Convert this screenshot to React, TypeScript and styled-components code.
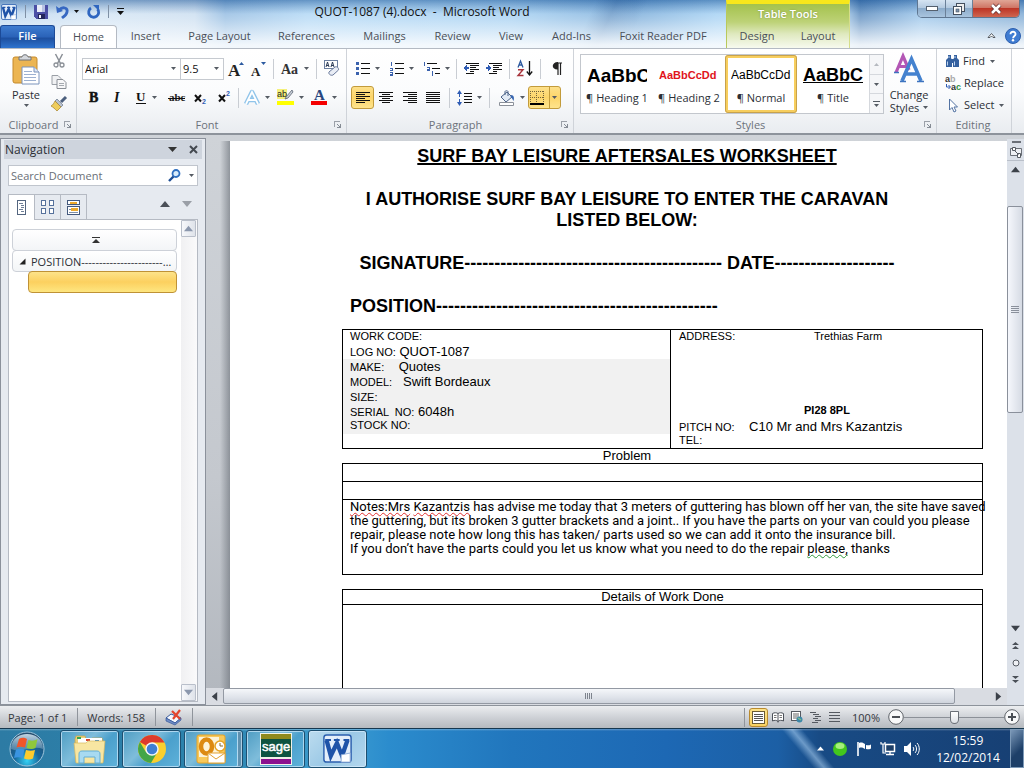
import React from "react";
import styled, { createGlobalStyle, css } from "styled-components";

const Global = createGlobalStyle`
  * { box-sizing: border-box; }
  html, body { margin: 0; padding: 0; }
  body { font-family: "Open Sans", "Noto Sans", sans-serif; font-size: 11px; color: #2b2f36; overflow: hidden; }
  button, input, select { font: inherit; color: inherit; margin: 0; }
  button { border: 0; padding: 0; background: none; cursor: default; }
  svg { display: block; flex: none; overflow: visible; }
`;

const Window = styled.div`
  display: flex;
  flex-direction: column;
  height: 100vh;
  min-width: 960px;
  overflow: hidden;
`;

/* ---------- title bar and tabs ---------- */

const Glass = styled.header`
  flex: none;
  background:
    linear-gradient(180deg, rgba(255,255,255,0) 0, rgba(255,255,255,0.35) 20px, rgba(250,252,254,0.92) 45px),
    linear-gradient(115deg, rgba(40,90,150,0) 57%, rgba(40,90,150,0.35) 59%, rgba(40,90,150,0) 62%),
    linear-gradient(180deg, rgba(30,85,150,0.5) 0, rgba(30,85,150,0) 14px),
    linear-gradient(90deg, #b4d2ee 0, #cfe2f3 10%, #c6dbef 19%, #8ab6df 22%, #a9d3f4 30%, #9ccbf0 50%, #6fa5d6 62%, #9bccf2 70%, #b7dcf8 82%, #4b80b8 84%, #90bfe8 90%, #6fa0cf 100%);
`;

const TitleRow = styled.div`
  display: grid;
  grid-template-columns: 1fr auto 1fr;
  height: 25px;
`;

const QuickBar = styled.div`
  display: flex;
  align-items: center;
  gap: 8px;
  padding-left: 1px;
  padding-bottom: 2px;
`;

const QuickButton = styled.button`
  display: flex;
  align-items: center;
  gap: 5px;
`;

const Rule = styled.span<{ $h?: number }>`
  width: 1px;
  height: ${(p) => p.$h ?? 24}px;
  background: #c9cdd3;
  flex: none;
`;

const DarkRule = styled(Rule)`
  background: #7f90a5;
`;

const DocTitle = styled.h1`
  margin: 0;
  padding-right: 180px;
  font-size: 12px;
  font-weight: 400;
  line-height: 24px;
  color: #111;
  white-space: pre;
`;

const TitleRight = styled.div`
  display: flex;
  justify-content: flex-end;
  align-items: flex-start;
`;

const WindowButtons = styled.div`
  display: flex;
  margin-right: 4px;
  border: 1px solid #5f7690;
  border-top: 0;
  border-radius: 0 0 5px 5px;
  overflow: hidden;
`;

const WindowButton = styled.button<{ $close?: boolean }>`
  display: flex;
  align-items: center;
  justify-content: center;
  height: 17px;
  width: ${(p) => (p.$close ? 47 : 27)}px;
  background: ${(p) =>
    p.$close
      ? "linear-gradient(#e0a596 0, #cf7565 45%, #bd3526 50%, #cf6650 100%)"
      : "linear-gradient(#d6e4f2 0, #b4cae0 45%, #8daccb 50%, #a9c4de 100%)"};
  & + & { border-left: 1px solid #6b8098; }
`;

const TabRow = styled.nav`
  display: flex;
  align-items: flex-end;
  height: 23px;
  padding-right: 3px;
`;

const FileTab = styled.button`
  width: 55px;
  height: 23px;
  margin-right: 5px;
  padding-bottom: 3px;
  border: 1px solid #1c4a97;
  border-bottom: 0;
  border-radius: 3px 3px 0 0;
  background: linear-gradient(#3f7dd0 0, #2a62b8 50%, #1d4f9f 55%, #2f74cf 100%);
  color: #fff;
  font-weight: 600;
`;

const Tab = styled.button<{ $w: number; $on?: boolean }>`
  width: ${(p) => p.$w}px;
  height: 23px;
  padding-bottom: 2px;
  color: #4a4f57;
  ${(p) =>
    p.$on &&
    css`
      height: 24px;
      margin-bottom: -1px;
      padding-bottom: 3px;
      border: 1px solid #b4bac3;
      border-bottom: 0;
      border-radius: 4px 4px 0 0;
      background: #fff;
    `}
`;

const ToolTabs = styled.div`
  display: flex;
  flex-direction: column;
  align-self: flex-end;
  height: 48px;
  width: 124px;
  margin-left: 5px;
  border-top: 4px solid #f8e71b;
  border-left: 1px solid #b9c95c;
  border-right: 1px solid #d6de8a;
  background: linear-gradient(#a4c24c 0, #bdd277 18px, #dfe9bf 30px, #f7faef 100%);
`;

const ToolTitle = styled.div`
  height: 21px;
  line-height: 20px;
  text-align: center;
  color: #fff;
  font-weight: 600;
  text-shadow: 0 0 2px #7f9440;
`;

const ToolRow = styled.div`
  display: flex;
  height: 23px;
`;

const TabEnd = styled.div`
  display: flex;
  align-items: center;
  gap: 9px;
  height: 23px;
  margin-left: auto;
  padding-bottom: 2px;
`;

/* ---------- ribbon ---------- */

const Ribbon = styled.div`
  flex: none;
  display: flex;
  height: 87px;
  border-top: 1px solid #b4bac3;
  border-bottom: 2px solid #8d939b;
  background: linear-gradient(#fff 0, #fbfcfd 50%, #e9ecf0 100%);
`;

const Group = styled.section<{ $w: number }>`
  display: flex;
  flex-direction: column;
  flex: 0 0 auto;
  width: ${(p) => p.$w}px;
  border-right: 1px solid #cfd3d9;
`;

const GroupBody = styled.div<{ $pad?: number; $top?: number }>`
  flex: 1;
  display: flex;
  padding: ${(p) => p.$top ?? 5}px 4px 0 ${(p) => p.$pad ?? 4}px;
`;

const GroupLabel = styled.div`
  display: flex;
  align-items: center;
  height: 16px;
  padding: 0 5px 2px 3px;
  color: #6c727b;
  span { flex: 1; text-align: center; }
`;

const Rows = styled.div`
  display: flex;
  flex-direction: column;
  gap: 6px;
  padding-top: 3px;
`;

const Row = styled.div`
  display: flex;
  align-items: center;
  height: 23px;
`;

const Tool = styled.button<{ $w: number; $on?: boolean }>`
  display: flex;
  align-items: center;
  justify-content: center;
  gap: 5px;
  width: ${(p) => p.$w}px;
  height: 23px;
  flex: none;
  border-radius: 3px;
  color: #111;
  ${(p) =>
    p.$on &&
    css`
      border: 1px solid #c29b3b;
      background: linear-gradient(#fde08a, #fcd56a 50%, #fee48c);
    `}
`;

const Split = styled.span`
  display: flex;
  align-items: center;
  justify-content: center;
  width: 11px;
  height: 21px;
  border-left: 1px solid #c29b3b;
`;

const Gap = styled.span<{ $w: number }>`
  display: flex;
  justify-content: center;
  width: ${(p) => p.$w}px;
`;

const Combo = styled.label<{ $w: number }>`
  position: relative;
  display: block;
  width: ${(p) => p.$w}px;
  height: 22px;
  margin-right: -1px;
  svg { position: absolute; right: 5px; top: 9px; pointer-events: none; }
  select {
    appearance: none;
    width: 100%;
    height: 22px;
    padding: 0 2px;
    border: 1px solid #c6cad0;
    background: #fff;
    color: #111;
    border-radius: 0;
  }
`;

const PasteButton = styled.button`
  display: flex;
  flex-direction: column;
  align-items: center;
  width: 44px;
  color: #2b2f36;
  span { line-height: 19px; }
`;

const SideIcons = styled.div`
  display: flex;
  flex-direction: column;
  align-items: center;
  gap: 7px;
  width: 22px;
`;

const Gallery = styled.div`
  display: flex;
  height: 60px;
  border: 1px solid #c3c7cd;
  background: #fff;
`;

const StyleItem = styled.button<{ $on?: boolean }>`
  width: 72px;
  height: 58px;
  display: flex;
  flex-direction: column;
  justify-content: space-between;
  align-items: center;
  padding: 8px 6px;
  overflow: hidden;
  ${(p) =>
    p.$on &&
    css`
      padding: 5px 3px;
      border: 3px solid #f7ce5e;
      outline: 1px solid #c8a24c;
      outline-offset: -1px;
      border-radius: 3px;
    `}
`;

const Sample = styled.span<{ $kind: "h1" | "h2" | "normal" | "title" }>`
  width: 60px;
  height: 25px;
  line-height: 25px;
  overflow: hidden;
  white-space: nowrap;
  text-align: left;
  font-family: "Liberation Sans", Arial, sans-serif;
  color: #000;
  ${(p) => p.$kind === "h1" && "font-size: 19px; font-weight: 700;"}
  ${(p) => p.$kind === "h2" && "font-size: 11px; font-weight: 700; color: #e0141c;"}
  ${(p) => p.$kind === "normal" && "font-size: 12px;"}
  ${(p) => p.$kind === "title" && "font-size: 18px; font-weight: 700; text-decoration: underline;"}
`;

const StyleName = styled.span`
  line-height: 14px;
  white-space: nowrap;
`;

const GalleryScroll = styled.div`
  display: flex;
  flex-direction: column;
  width: 14px;
  border-left: 1px solid #d5d8dd;
  button {
    flex: 1;
    display: flex;
    align-items: center;
    justify-content: center;
    background: #f5f6f8;
  }
  button + button { border-top: 1px solid #d5d8dd; }
`;

const ChangeButton = styled.button`
  display: flex;
  flex-direction: column;
  align-items: center;
  width: 50px;
  margin-left: 2px;
  line-height: 13px;
  > span:first-of-type { margin-top: 5px; }
`;

const Inline = styled.span`
  display: flex;
  align-items: center;
  gap: 4px;
`;

const EditList = styled.div`
  display: flex;
  flex-direction: column;
`;

const EditButton = styled.button`
  display: flex;
  align-items: center;
  gap: 3px;
  height: 22px;
  line-height: 16px;
`;

/* ---------- workspace ---------- */

const Workspace = styled.main`
  flex: 1;
  min-height: 0;
  display: flex;
  background: linear-gradient(#cfd3d8 0, #c4c8ce 60%, #b2b7be 100%);
`;

const NavPane = styled.aside`
  display: flex;
  flex-direction: column;
  width: 206px;
  flex: none;
  margin-top: 3px;
  padding: 1px 3px 2px 3px;
  border: 1px solid #8b919b;
  background: #e6eaf0;
`;

const NavHead = styled.div`
  display: flex;
  align-items: center;
  gap: 12px;
  height: 19px;
  padding: 0 4px 0 1px;
  background: #ced4dd;
  h2 { flex: 1; margin: 0; font-size: 12px; font-weight: 400; line-height: 17px; }
`;

const Search = styled.label`
  display: flex;
  align-items: center;
  gap: 8px;
  height: 21px;
  margin: 6px 4px 8px;
  padding: 0 3px 0 2px;
  border: 1px solid #c0c5cd;
  background: #fff;
  input {
    flex: 1;
    min-width: 0;
    border: 0;
    padding: 0;
    outline: 0;
    background: none;
  }
  input::placeholder { color: #6a6f77; opacity: 1; }
`;

const NavTabs = styled.div`
  display: flex;
  margin: 0 4px;
  height: 25px;
`;

const NavTab = styled.button<{ $on?: boolean }>`
  display: flex;
  align-items: center;
  justify-content: center;
  width: 27px;
  height: ${(p) => (p.$on ? 26 : 25)}px;
  margin-right: -1px;
  border: 1px solid #b5bac3;
  border-bottom: 0;
  background: ${(p) => (p.$on ? "#fff" : "#e6eaf0")};
  z-index: 1;
`;

const NavArrows = styled.div`
  display: flex;
  align-items: center;
  gap: 12px;
  margin-left: auto;
  padding-right: 6px;
  padding-bottom: 5px;
`;

const NavList = styled.div`
  flex: 1;
  display: flex;
  margin: 0 4px;
  border: 1px solid #b5bac3;
  background: #fff;
`;

const Headings = styled.div`
  flex: 1;
  display: flex;
  flex-direction: column;
  align-items: flex-end;
  padding: 9px 4px 0 2px;
  min-width: 0;
`;

const Heading = styled.button<{ $level: number; $on?: boolean }>`
  display: flex;
  align-items: center;
  justify-content: ${(p) => (p.$level ? "flex-start" : "center")};
  gap: 5px;
  width: ${(p) => (p.$level === 2 ? 149 : 165)}px;
  height: 22px;
  margin-bottom: -1px;
  padding: 0 3px 0 6px;
  border: 1px solid ${(p) => (p.$on ? "#bf9236" : "#cdd1d8")};
  border-radius: 4px;
  background: ${(p) => (p.$on ? "linear-gradient(#fde38a, #fcd05f 50%, #fee680)" : "linear-gradient(#fff, #f3f5f7)")};
  white-space: nowrap;
  span { overflow: hidden; text-overflow: ellipsis; }
`;

const NavScroll = styled.div`
  display: flex;
  flex-direction: column;
  justify-content: space-between;
  width: 16px;
  background: linear-gradient(90deg, #f0f0f2, #fafafb);
`;

const ScrollEnd = styled.button`
  display: flex;
  align-items: center;
  justify-content: center;
  width: 15px;
  height: 17px;
  border: 1px solid #b9bfca;
  border-radius: 1px;
  background: linear-gradient(90deg, #f7f8fb, #dfe3ea);
`;

const DocPane = styled.div`
  flex: 1;
  min-width: 0;
  display: flex;
  flex-direction: column;
`;

const DocView = styled.div`
  flex: 1;
  min-height: 0;
  margin-top: 6px;
  padding-left: 24px;
  overflow: hidden;
  background: linear-gradient(90deg, rgba(110,116,124,0) 14px, rgba(110,116,124,0.65) 24px);
`;

const Page = styled.article`
  min-height: 100%;
  padding: 5px 0 0 112px;
  background: #fff;
  color: #000;
  font-family: "Liberation Sans", Arial, sans-serif;
  font-size: 13px;
  line-height: 15px;
  white-space: pre;
`;

const Column = styled.div`
  max-width: 570px;
  padding: 0 8px;
`;

const Big = styled.p<{ $left?: boolean; $under?: boolean }>`
  margin: 0 0 22px;
  font-size: 18px;
  line-height: 21px;
  font-weight: 700;
  text-align: ${(p) => (p.$left ? "left" : "center")};
  text-decoration: ${(p) => (p.$under ? "underline" : "none")};
  text-decoration-thickness: 2px;
  text-underline-offset: 1px;
  &:last-child { margin-bottom: 12px; }
`;

const Sheet = styled.table`
  width: 641px;
  border-collapse: collapse;
  table-layout: fixed;
  td, th { border: 1px solid #000; padding: 0; vertical-align: top; font-weight: 400; }
`;

const Line = styled.div<{ $short?: boolean; $shade?: boolean; $tight?: boolean }>`
  height: ${(p) => (p.$short ? 14 : 15)}px;
  line-height: ${(p) => (p.$short || p.$tight ? 12 : 15)}px;
  padding-left: 7px;
  background: ${(p) => (p.$shade ? "#f1f1f1" : "transparent")};
  small { font-size: 11px; }
`;

const RightCell = styled.div`
  padding-left: 1px;
`;

const Address = styled.div`
  display: grid;
  grid-template-columns: 135px 1fr;
  padding-left: 7px;
  height: 74px;
  font-size: 11px;
  line-height: 13px;
`;

const Postcode = styled.div`
  height: 15px;
  padding-left: 132px;
  font-size: 11px;
  line-height: 13px;
  font-weight: 700;
`;

const Caption = styled.div`
  height: 14px;
  line-height: 13px;
  text-align: center;
`;

const Cell = styled.td<{ $h: number }>`
  height: ${(p) => p.$h}px;
`;

const Notes = styled.p`
  margin: 0;
  padding-left: 7px;
  font-family: Roboto, "Liberation Sans", sans-serif;
  line-height: 14px;
`;

const Squiggle = styled.span<{ $c: string }>`
  text-decoration: underline wavy ${(p) => p.$c} 1px;
  text-underline-offset: 1px;
  text-decoration-skip-ink: none;
`;

const HScroll = styled.div`
  display: flex;
  flex: none;
  height: 17px;
  background: #d9dce2;
`;

const BarEnd = styled.button<{ $tall?: boolean }>`
  display: flex;
  align-items: center;
  justify-content: center;
  width: 17px;
  height: ${(p) => (p.$tall ? 22 : 17)}px;
  flex: none;
  border-bottom: ${(p) => (p.$tall ? "1px solid #b9bfc9" : "0")};
`;

const HThumb = styled.div`
  flex: 1;
  display: flex;
  align-items: center;
  justify-content: center;
  height: 16px;
  margin-right: 35px;
  border: 1px solid #9399a3;
  border-radius: 2px;
  background: linear-gradient(#f5f7fa, #dfe3ea 60%, #cfd4dc);
`;

const VScroll = styled.div`
  display: flex;
  flex-direction: column;
  align-items: center;
  width: 17px;
  margin-top: 4px;
  padding-bottom: 17px;
  flex: none;
  background: #dce1e9;
`;

const VTrack = styled.div`
  flex: 1;
  width: 100%;
  padding-top: 28px;
`;

const VThumb = styled.div`
  display: flex;
  align-items: center;
  justify-content: center;
  width: 16px;
  height: 50%;
  border: 1px solid #8a909b;
  border-radius: 2px;
  background: linear-gradient(90deg, #f5f7fc, #d6dbe4);
`;

/* ---------- status bar ---------- */

const Status = styled.footer`
  flex: none;
  display: flex;
  align-items: center;
  height: 23px;
  padding: 0 4px 0 8px;
  border-top: 1px solid #8d939b;
  background: linear-gradient(#eceef0, #cfd2d7 50%, #b6babf);
  color: #33373d;
`;

const StatusText = styled.button`
  padding-right: 10px;
  margin-right: 9px;
  height: 18px;
  border-right: 1px solid #8f949b;
`;

const Views = styled.div`
  display: flex;
  margin-left: auto;
  padding-left: 4px;
  border-left: 1px solid #8f949b;
`;

const Percent = styled.button`
  margin: 0 8px;
`;

const ViewButton = styled.button<{ $on?: boolean }>`
  display: flex;
  align-items: center;
  justify-content: center;
  width: 19px;
  height: 19px;
  border-radius: 3px;
  border: ${(p) => (p.$on ? "1px solid #b98a2e" : "0")};
  background: ${(p) => (p.$on ? "linear-gradient(#fde38a, #f9d262)" : "none")};
`;

const Zoom = styled.input`
  appearance: none;
  width: 100px;
  height: 14px;
  background: linear-gradient(#8b9097, #8b9097) center / 100% 1px no-repeat;
  &::-webkit-slider-thumb {
    appearance: none;
    width: 9px;
    height: 13px;
    border: 1px solid #6a6f76;
    border-radius: 1px 1px 5px 5px;
    background: linear-gradient(#fff, #dfe2e6);
  }
`;

/* ---------- taskbar ---------- */

const Taskbar = styled.div`
  flex: none;
  display: flex;
  align-items: center;
  height: 40px;
  padding-left: 9px;
  border-top: 1px solid #16374f;
  color: #fff;
  background:
    linear-gradient(180deg, rgba(255,255,255,0.3) 0, rgba(255,255,255,0) 2px),
    linear-gradient(50deg, rgba(190,225,255,0) 77%, rgba(190,225,255,0.5) 78%, rgba(190,225,255,0) 79%),
    linear-gradient(90deg, #2d7ba4 0, #2b83ad 20%, #3d9dd0 33%, #2b8ccd 38%, #2176bd 50%, #1d68b4 65%, #1c5fa5 76%, #184b85 80%, #173f73 100%);
`;

const Start = styled.button`
  margin-right: 15px;
`;

const TaskButton = styled.button<{ $on?: boolean; $stack?: boolean }>`
  display: flex;
  align-items: center;
  justify-content: center;
  width: 59px;
  height: 38px;
  margin-right: 3px;
  padding-right: ${(p) => (p.$stack ? 6 : 0)}px;
  border: 1px solid #1d4f70;
  border-radius: 3px;
  box-shadow: inset 0 0 0 1px rgba(220,240,255,0.65)${(p) => (p.$stack ? ", inset -4px 0 0 rgba(30,85,120,0.55), inset -5px 0 0 rgba(220,240,255,0.7)" : "")};
  background: ${(p) =>
    p.$on
      ? "linear-gradient(135deg, #bcdcef, #9cc9e6 50%, #b3d7ee)"
      : "linear-gradient(135deg, #4f9dc3 0, #7fbddb 40%, #4ba0cc 60%, #5fb2da 100%)"};
`;

const Tray = styled.div`
  display: flex;
  align-items: center;
  gap: 8px;
  margin-left: auto;
`;

const Clock = styled.time`
  width: 80px;
  font-size: 12px;
  line-height: 17px;
  text-align: center;
`;

const ShowDesktop = styled.button`
  width: 14px;
  height: 39px;
  margin-left: -6px;
  border: 1px solid #7d9ab8;
  background: linear-gradient(135deg, #7b98b8, #1d3f68 60%);
`;

/* ---------- icons ---------- */

const Ic = ({ w = 16, h = 16, children, crisp, vb }: { w?: number; h?: number; crisp?: boolean; vb?: string; children: React.ReactNode }) => (
  <svg width={w} height={h} viewBox={vb ?? `0 0 ${w} ${h}`} fill="none" shapeRendering={crisp ? "crispEdges" : "auto"} aria-hidden="true">
    {children}
  </svg>
);

const Down = ({ c = "#555b63" }: { c?: string }) => <Ic w={5} h={3}><path d="M0 0h5L2.5 3z" fill={c} /></Ic>;

const Tri = ({ dir, c = "#3c4149", s = 10 }: { dir: "u" | "d" | "l" | "r"; c?: string; s?: number }) => (
  <Ic w={s} h={s} vb="0 0 10 10">
    <path d={{ u: "M0 8L5 2l5 6z", d: "M0 2h10L5 8z", l: "M8 0v10L2 5z", r: "M2 0l6 5-6 5z" }[dir]} fill={c} />
  </Ic>
);

const Launcher = () => (
  <Ic w={7} h={7} crisp><path d="M0.5 6V0.5H6" stroke="#9ba0a8" /><path d="M3 3l3 3M6.5 3v3.5H3" stroke="#858b94" /></Ic>
);

const WordIcon = ({ s }: { s: number }) => (
  <Ic w={s} h={s} vb="0 0 16 16">
    <rect x="0.5" y="0.5" width="15" height="15" rx="1.5" fill="#e4eefa" stroke="#2b5fae" strokeWidth=".8" />
    <path d="M2 3.500l2.300 8.500L7.700 5l2.800 7 3-8.500" stroke="#1f53a8" strokeWidth="2.400" />
    <path d="M1.200 3.300h3.200M6 3.300h3.200M11.300 3.300h3.200" stroke="#1f53a8" strokeWidth="1.200" />
    <path d="M10 11.500l5-1v5h-5z" fill="#fff" stroke="#8aa9d6" strokeWidth="0.5" />
  </Ic>
);

const SaveIcon = () => (
  <Ic w={14} h={14} crisp>
    <path d="M0 0h14v14H2l-2-2z" fill="#4b4fa5" /><path d="M3 0h8v7H3z" fill="#e9edf8" /><path d="M8 0h3v7H8z" fill="#b9c3e4" /><path d="M4 9h7v5H4z" fill="#23265c" /><path d="M5 10h2v3H5z" fill="#f3f4fb" />
  </Ic>
);

const UndoIcon = () => (
  <Ic w={13} h={14}><path d="M3 5c4-4 9-2 8 2-.4 3-3 4.500-5 6" stroke="#3768c2" strokeWidth="2.800" /><path d="M0 1l1 7 6-2z" fill="#3768c2" /></Ic>
);

const RedoIcon = () => (
  <Ic w={13} h={14}><path d="M4 3a5 5 0 1 0 6.500 1" stroke="#2f66c0" strokeWidth="2.800" /><path d="M6 0h6v6z" fill="#2f66c0" /></Ic>
);

const alignWidths: Record<string, [number, number][]> = {
  left: [[0, 14], [0, 9], [0, 14], [0, 9], [0, 14], [0, 9]],
  center: [[0, 14], [3, 8], [0, 14], [3, 8], [0, 14], [3, 8]],
  right: [[0, 14], [5, 9], [0, 14], [5, 9], [0, 14], [5, 9]],
  full: [[0, 14], [0, 14], [0, 14], [0, 14], [0, 14], [0, 14]],
};

const AlignIcon = ({ kind, c = "#111" }: { kind: string; c?: string }) => (
  <Ic w={14} h={12} crisp>
    {alignWidths[kind].map(([x, w], i) => <rect key={i} x={x} y={i * 2} width={w} height="1" fill={c} />)}
  </Ic>
);

const ListIcon = ({ kind }: { kind: "dots" | "nums" | "multi" }) => (
  <Ic w={kind === "multi" ? 17 : 14} h={14} crisp>
    {kind === "dots" && [1, 6, 11].map((y) => <g key={y}><rect x="0" y={y - 1} width="3" height="3" fill="#3b62ad" /><rect x="5" y={y} width="9" height="1" fill="#111" /></g>)}
    {kind === "nums" && <g><path d="M1.500 0v4M0 6.500h2v2H0M0 10.500h2v3H0M0 12h2" stroke="#3b62ad" />{[1, 6, 11].map((y) => <rect key={y} x="5" y={y} width="9" height="1" fill="#111" />)}</g>}
    {kind === "multi" && <g><path d="M1.500 0v4M4 5.500h2v3H4v-1.500h2M9.500 9v5" stroke="#3b62ad" /><path d="M4 1.500h10M9 6.500h8M12 11.500h5" stroke="#111" /></g>}
  </Ic>
);

const IndentIcon = ({ out }: { out?: boolean }) => (
  <Ic w={16} h={13} crisp>
    <path d="M3 1.500h13M7 3.500h9M7 5.500h6M7 7.500h9M7 9.500h4M3 11.500h8" stroke="#111" />
    <path d={out ? "M0 6l4-3v2h2v2H4v2z" : "M6 6L2 3v2H0v2h2v2z"} fill="#2f5cb4" />
  </Ic>
);

const SortIcon = () => (
  <Ic w={16} h={17}>
    <path d="M1 7.500L3.500 1 6 7.500M2 5h3" stroke="#2c5aa0" strokeWidth="1.300" />
    <path d="M1 9.700h5L1 15.500h5.500" stroke="#a8343c" strokeWidth="1.400" />
    <path d="M12.500 1v13M9.800 11.500l2.700 3.500 2.700-3.500" stroke="#111" strokeWidth="1.300" />
  </Ic>
);

const SpacingIcon = () => (
  <Ic w={15} h={16}>
    <path d="M2.500 2v12" stroke="#2f5cb4" strokeDasharray="5 2" /><path d="M0 4l2.500-4L5 4zM0 12l2.500 4L5 12z" fill="#2f5cb4" />
    <path d="M7 3.500h8M7 6.500h8M7 9.500h8M7 12.500h8" stroke="#111" />
  </Ic>
);

const ShadingIcon = () => (
  <Ic w={17} h={16}>
    <path d="M3 7l6-5 5 5-6 5z" fill="#e3ebf5" stroke="#4b6288" /><path d="M7 5V1.500c0-1 3-1 3 0V6" stroke="#4b6288" /><path d="M13 5c3 0 3.500 3 2.500 6-1-1-1-3-3-4z" fill="#3766b0" />
    <path d="M1.500 12.500h14v3h-14z" fill="#fff" stroke="#8b9099" />
  </Ic>
);

const BorderIcon = () => (
  <Ic w={14} h={14} crisp>
    <path d="M0 .5h14M0 6.500h14M.5 0v14M6.500 0v14M13.500 0v14" stroke="#73643a" strokeDasharray="1 1" /><path d="M0 13h14" stroke="#000" strokeWidth="2" />
  </Ic>
);

const PasteIcon = () => (
  <Ic w={28} h={31}>
    <rect x="1" y="3" width="24" height="26" rx="2" fill="#ecb552" stroke="#c48a2c" />
    <path d="M7 6V3h3c0-3 6-3 6 0h3v3z" fill="#d5d8dd" stroke="#6e7278" />
    <path d="M10 13h12l5 5v12H10z" fill="#fff" stroke="#7a93bb" /><path d="M22 13v5h5" fill="#dfe8f5" stroke="#7a93bb" />
    <path d="M12 17.500h8M12 20.500h12M12 23.500h12M12 26.500h12" stroke="#9db1d1" />
  </Ic>
);

const CutIcon = () => (
  <Ic w={12} h={14}><path d="M2.500 0l5 9.500M9.500 0l-5 9.500" stroke="#8a8f96" strokeWidth="1.500" /><circle cx="3" cy="11" r="2" stroke="#8a8f96" strokeWidth="1.300" /><circle cx="9" cy="11" r="2" stroke="#8a8f96" strokeWidth="1.300" /></Ic>
);

const CopyIcon = () => (
  <Ic w={16} h={14}><path d="M1 .5h6l3 3v6H1z" fill="#f0f1f3" stroke="#9a9fa6" /><path d="M6 4.500h6l3 3v6H6z" fill="#f7f7f8" stroke="#8a8f96" /><path d="M8 8.500h5M8 10.500h5" stroke="#a5aab0" /></Ic>
);

const BrushIcon = () => (
  <Ic w={16} h={15}><path d="M15 1l-5 5" stroke="#4c5f7d" strokeWidth="3" /><path d="M6 3l6 6-2 2-6-6z" fill="#b8c1ce" stroke="#68758a" strokeWidth=".7" /><path d="M4 5l6 6-4 4C4 13 2 11 0 10c2-1 3-3 4-5z" fill="#efcd5c" stroke="#a5822c" strokeWidth=".7" /></Ic>
);

const EraserIcon = () => (
  <Ic w={17} h={17}>
    <rect x="1.500" y=".5" width="13" height="8" fill="#fff" stroke="#6c7f9f" />
    <path d="M3 7l1.500-5L6 7M8 7l1.500-5L11 7M3.500 5.500h2M8.500 5.500h2" stroke="#2a3a55" />
    <path d="M6 12l6-5c2-1 4 1 3.500 3L10 15c-2 1-5-1-4-3z" fill="#e9edf5" stroke="#68789a" />
  </Ic>
);

const HighlightIcon = () => (
  <Ic w={17} h={17}>
    <rect width="10" height="10" y="0" fill="#f4f07a" /><text x="0" y="8" fontSize="9" fontFamily="Liberation Sans" fill="#222">ab</text>
    <path d="M15 1l-6 7-1 2 3-1 5-6z" fill="#c7cdd6" stroke="#5b6472" strokeWidth=".8" /><path d="M0 12h17v4H0z" fill="#ff0" />
  </Ic>
);

const FontColorIcon = () => (
  <Ic w={16} h={17}><text x="3" y="11" fontSize="15" fontWeight="700" fontFamily="Liberation Serif" fill="#27477f">A</text><path d="M0 12h16v4H0z" fill="#f40000" /></Ic>
);

const GlowIcon = () => (
  <Ic w={16} h={16}><path d="M2 14L8 2l6 12M4.500 10h7" stroke="#8fc4ea" strokeWidth="4.500" strokeLinejoin="round" /><path d="M2 14L8 2l6 12M4.500 10h7" stroke="#fff" strokeWidth="1.800" /></Ic>
);

const GrowIcon = ({ down }: { down?: boolean }) => (
  <Ic w={16} h={16}>
    <text x="0" y="15" fontSize={down ? 13 : 17} fontWeight="700" fontFamily="Liberation Serif" fill="#222">A</text>
    <path d={down ? "M10 1h5l-2.500 3z" : "M11 4h5l-2.500-3z"} fill="#2c5aa0" />
  </Ic>
);

const ChangeIcon = () => (
  <Ic w={30} h={29}>
    <path d="M2 18.500L9 2l6 14M5 12.500h8" stroke="#b357b5" strokeWidth="3.200" />
    <path d="M8 27L17.500 5 27 27M12 20h11" stroke="#4482cf" strokeWidth="3.600" /><path d="M6 27.500h6M23 27.500h7M0 18.500h5" stroke="#3d73bf" strokeWidth="1.400" />
  </Ic>
);

const FindIcon = () => (
  <Ic w={15} h={14}><path d="M3 1h3v3l1 2v7H1V6l2-2zM9 1h3v3l2 2v7H8V6l1-2z" fill="#35619f" /><path d="M6 5h3v4H6z" fill="#35619f" /><path d="M2.500 7.500v4M9.500 7.500v4M4 2v2M10 2v2" stroke="#bcd2ee" /></Ic>
);

const ReplaceIcon = () => (
  <Ic w={16} h={16}>
    <text x="0" y="7" fontSize="9" fontWeight="700" fontFamily="Liberation Sans" fill="#333">a<tspan fill="#aaa">b</tspan></text>
    <text x="6" y="15" fontSize="9" fontWeight="700" fontFamily="Liberation Sans" fill="#333">a<tspan fill="#2d9145">c</tspan></text>
    <path d="M1.500 9v3H5M3.500 10l2 2-2 2" stroke="#2f5cb4" />
  </Ic>
);

const PointerIcon = () => <Ic w={16} h={15}><path d="M4.500 1v11l2.500-2.500 2 4.500 2-1-2-4h3.500z" fill="#fff" stroke="#5373a3" /></Ic>;

const SearchIcon = () => <Ic w={13} h={13}><circle cx="8" cy="4.500" r="3.500" fill="#d9ecfb" stroke="#2f6fc0" strokeWidth="1.800" /><path d="M5.500 7.500L1 12" stroke="#1e4e94" strokeWidth="2.400" /></Ic>;

const PageTab = () => <Ic w={9} h={15} crisp><rect x=".5" y=".5" width="8" height="14" fill="#fff" stroke="#53657f" /><path d="M2 3.500h4M4 5.500h3M4 7.500h3M2 9.500h4M4 11.500h3" stroke="#6f7f96" /></Ic>;
const GridTab = () => <Ic w={13} h={15} crisp>{[[0, 0], [8, 0], [0, 8], [8, 8]].map(([x, y]) => <rect key={`${x}${y}`} x={x + 0.5} y={y + 0.5} width="4" height="5" fill="#fff" stroke="#56719c" />)}</Ic>;
const ResultTab = () => <Ic w={13} h={15} crisp><rect x=".5" y=".5" width="12" height="4" fill="#fff" stroke="#44597d" /><rect x="3" y="2" width="7" height="2" fill="#eda92c" /><rect x=".5" y="6.500" width="12" height="8" fill="#fff" stroke="#44597d" /><rect x="4" y="8" width="7" height="3" fill="#eda92c" /><path d="M2 12.500h9M2 9.500h2" stroke="#7f8ea6" /></Ic>;

const BookIcon = () => <Ic w={17} h={15}><path d="M1 8l5-4 10 4-6 5z" fill="#f5f8fc" stroke="#35589c" /><path d="M1 8v3l9 4 6-5V8l-6 5z" fill="#6e8dc4" stroke="#35589c" strokeWidth=".7" /><path d="M7 1l8 8M15 0L8 9" stroke="#e4452c" strokeWidth="2.200" /></Ic>;

const PrintView = () => <Ic w={13} h={13} crisp><rect x=".5" y=".5" width="12" height="12" fill="#fff" stroke="#6b5c34" /><path d="M2 3.500h9M2 5.500h9M2 7.500h9M2 9.500h9" stroke="#555" /></Ic>;
const ReadView = () => <Ic w={12} h={11}><path d="M.5 1.500c2-1 4-1 5.500 0 1.500-1 3.500-1 5.500 0v7.500c-2-1-4-1-5.500.5C4.500 8 2.500 8 .5 9zM6 1.500v9" fill="#fff" stroke="#4c5159" /><path d="M2 3.500h2.500M2 5.500h2.500M7.500 3.500H10M7.500 5.500H10" stroke="#777" /></Ic>;
const WebView = () => <Ic w={12} h={12}><rect x=".5" y=".5" width="9" height="9" fill="#fff" stroke="#555a61" /><path d="M2 3h6M2 5h6M2 7h4" stroke="#666" /><circle cx="8.500" cy="8.500" r="3" fill="#3a86a8" /><path d="M7 7l3 2" stroke="#7cc08a" strokeWidth="1.500" /></Ic>;
const OutlineView = () => <Ic w={11} h={11} crisp><path d="M0 .5h6M3 2.500h6M5 4.500h6M3 6.500h5M5 8.500h6M2 10.500h6" stroke="#555a61" /></Ic>;
const DraftView = () => <Ic w={11} h={11} crisp><path d="M0 .5h11M0 3.500h11M0 6.500h11M0 9.500h11" stroke="#555a61" /></Ic>;

const Round = ({ plus }: { plus?: boolean }) => (
  <Ic w={16} h={16}><circle cx="8" cy="8" r="7.300" fill="#f8f9fa" stroke="#5e6369" /><path d={plus ? "M4 8h8M8 4v8" : "M4 8h8"} stroke="#4b5056" strokeWidth="2" /></Ic>
);

const StartIcon = () => (
  <Ic w={36} h={36}>
    <defs>
      <radialGradient id="orb" cx=".5" cy=".85" r=".8"><stop offset="0" stopColor="#35d1f5" /><stop offset=".45" stopColor="#17689c" /><stop offset="1" stopColor="#244c6d" /></radialGradient>
      <linearGradient id="gloss" x1="0" x2="0" y1="0" y2="1"><stop offset="0" stopColor="#e0eef7" stopOpacity=".85" /><stop offset="1" stopColor="#9fc3da" stopOpacity=".35" /></linearGradient>
    </defs>
    <circle cx="18" cy="18" r="17" fill="url(#orb)" stroke="#9fc6dd" />
    <path d="M2 18C2 -2 34 -2 34 18 24 14 12 22 2 18z" fill="url(#gloss)" />
    <path d="M10 8c3-2 6-1 8 0l-2 8.500c-3-1-6-1-8.500 0z" fill="#f0562a" />
    <path d="M19.500 9c3 1 6 1 9-1l-2 9c-3 1.500-6 1-9 0z" fill="#8fc83c" />
    <path d="M7 18.500c3-1 6-1 8.500 0l-2 8.500c-3-1-6-1-8.500 0z" fill="#3a94e0" />
    <path d="M17 19c3 1 6 1 9 0l-2 8.500c-3 1.500-6 1-9 0z" fill="#fccb2d" />
  </Ic>
);

const FolderIcon = () => (
  <Ic w={34} h={30}>
    <path d="M2 5l1-3h9l1 3h5l1-1h10l1 4v20H3z" fill="#ecd07c" stroke="#c9a546" strokeWidth=".7" />
    <path d="M5 4h24v6H5z" fill="#fff" /><path d="M4 3h4v2H4z" fill="#38a54a" /><path d="M13 5h4v2h-4z" fill="#d94630" /><path d="M22 6h4v2h-4z" fill="#3b87d0" />
    <path d="M1 9h12l2-2h17l-2 22H3z" fill="#f8e6a2" stroke="#d6b75e" strokeWidth=".7" />
    <path d="M6 29V20c0-2 1-3 3-3h15c2 0 3 1 3 3v9h-5v-6H11v6z" fill="#a8daf1" stroke="#62aed6" />
  </Ic>
);

const ChromeIcon = () => (
  <Ic w={30} h={30}>
    <circle cx="15" cy="15" r="14" fill="#f9cf2e" />
    <path d="M15 15L2.900 8A14 14 0 0 1 27.500 8.500H15z" fill="#dc3b2c" /><path d="M2.900 8A14 14 0 0 0 14 29l6.500-11L15 15 8.500 17.500z" fill="#43a648" />
    <circle cx="15" cy="15" r="6.700" fill="#f5f7f8" /><circle cx="15" cy="15" r="5.300" fill="#3e7fd4" />
  </Ic>
);

const OutlookIcon = () => (
  <Ic w={30} h={30}>
    <rect x="1" y="1" width="28" height="28" rx="2" fill="#f8c95b" stroke="#e6a324" /><path d="M3 3h20v20H3z" fill="#fdf3d8" />
    <ellipse cx="10.500" cy="12.500" rx="5.500" ry="7" stroke="#dd8a12" strokeWidth="4.500" />
    <path d="M12 19h17v10H12z" fill="#fff" stroke="#e3a233" /><path d="M12 19l8 6 9-6" stroke="#e3a233" />
    <circle cx="24" cy="12" r="5" fill="#fff" stroke="#e6a324" strokeWidth="1.500" /><path d="M24 9v3h3" stroke="#8a6a2e" />
  </Ic>
);

const SageIcon = () => (
  <Ic w={32} h={32}>
    <path d="M0 0h32v32H0z" fill="#f1f2e8" /><path d="M1 1h30v5H1z" fill="#8f8a1e" /><path d="M1 6h30v18H1z" fill="#0e5340" /><path d="M1 26h30v5H1z" fill="#8c118f" />
    <text x="2" y="18" fontSize="13" fontFamily="Liberation Sans" fill="#fff" stroke="#fff" strokeWidth=".5">sage</text>
  </Ic>
);

const FlagIcon = () => <Ic w={16} h={15}><path d="M2 1v14" stroke="#fff" strokeWidth="1.600" /><path d="M3 2c3-1 4 0 6 1v5C7 7 6 6 3 7zM10 4c2 .5 3 .5 5-.5v4c-2 1-3 1-5 .5z" fill="#fff" /></Ic>;
const NetIcon = () => <Ic w={16} h={15}><path d="M5.500 3.500h9v7h-9z" stroke="#fff" strokeWidth="1.500" fill="#1d3f68" /><path d="M10 11v2M6 13.500h8" stroke="#fff" strokeWidth="1.400" /><path d="M1 1v2h4V1M3 3v9h3" stroke="#fff" strokeWidth="1.200" /></Ic>;
const SoundIcon = () => <Ic w={16} h={14}><path d="M0 4h3l4-4v14l-4-4H0z" fill="#fff" /><path d="M9 5c1 1 1 3 0 4M11 3c2 2 2 6 0 8M13 1c3 3 3 9 0 12" stroke="#fff" /></Ic>;

/* ---------- data ---------- */

const tabs: [string, number][] = [
  ["Insert", 57], ["Page Layout", 91], ["References", 83], ["Mailings", 73], ["Review", 63], ["View", 54], ["Add-Ins", 67], ["Foxit Reader PDF", 116],
];

const styleItems = [
  { sample: "AaBbCc", name: "¶ Heading 1", kind: "h1" as const },
  { sample: "AaBbCcDd", name: "¶ Heading 2", kind: "h2" as const },
  { sample: "AaBbCcDd", name: "¶ Normal", kind: "normal" as const, on: true },
  { sample: "AaBbC", name: "¶ Title", kind: "title" as const },
];

const details: [string, string][] = [
  ["MAKE:", "    Quotes"], ["MODEL:", "   Swift Bordeaux"], ["SIZE:", ""], ["SERIAL  NO:", " 6048h"],
];

const Label = ({ text, launcher = true }: { text: string; launcher?: boolean }) => (
  <GroupLabel><span>{text}</span>{launcher && <Launcher />}</GroupLabel>
);

export default function App() {
  return (
    <Window>
      <Global />
      <Glass>
        <TitleRow>
          <QuickBar>
            <WordIcon s={16} />
            <DarkRule $h={13} />
            <QuickButton aria-label="Save"><SaveIcon /></QuickButton>
            <QuickButton aria-label="Undo"><UndoIcon /><Down c="#111" /></QuickButton>
            <QuickButton aria-label="Redo"><RedoIcon /></QuickButton>
            <DarkRule $h={13} />
            <QuickButton aria-label="Customize toolbar"><Ic w={7} h={7}><path d="M0 .5h7" stroke="#111" /><path d="M0 3h7L3.500 7z" fill="#111" /></Ic></QuickButton>
          </QuickBar>
          <DocTitle>QUOT-1087 (4).docx  -  Microsoft Word</DocTitle>
          <TitleRight>
            <WindowButtons>
              <WindowButton aria-label="Minimize"><Ic w={12} h={5}><rect x=".5" y=".5" width="11" height="4" fill="#fff" stroke="#55606e" /></Ic></WindowButton>
              <WindowButton aria-label="Restore"><Ic w={12} h={12}><rect x="3.500" y=".5" width="8" height="8" fill="#eee" stroke="#444f5e" /><rect x=".5" y="3.500" width="8" height="8" fill="#fff" stroke="#444f5e" /><rect x="3" y="6" width="3" height="3" fill="#7b93ad" stroke="#444f5e" strokeWidth=".6" /></Ic></WindowButton>
              <WindowButton $close aria-label="Close"><Ic w={12} h={10}><path d="M2 1l8 8M10 1L2 9" stroke="#5d2a2a" strokeWidth="4" /><path d="M2 1l8 8M10 1L2 9" stroke="#fff" strokeWidth="2.600" /></Ic></WindowButton>
            </WindowButtons>
          </TitleRight>
        </TitleRow>
        <TabRow>
          <FileTab>File</FileTab>
          <Tab $w={57} $on>Home</Tab>
          {tabs.map(([t, w]) => <Tab key={t} $w={w}>{t}</Tab>)}
          <ToolTabs>
            <ToolTitle>Table Tools</ToolTitle>
            <ToolRow><Tab $w={61}>Design</Tab><Tab $w={63}>Layout</Tab></ToolRow>
          </ToolTabs>
          <TabEnd>
            <button aria-label="Minimize the ribbon"><Ic w={9} h={7}><path d="M1 5.500l3.500-4 3.500 4H6L4.500 4 3 5.500z" fill="#fff" stroke="#555b63" /></Ic></button>
            <button aria-label="Help"><Ic w={16} h={16}><circle cx="8" cy="8" r="7.500" fill="#3f7cd2" stroke="#2c5fae" /><path d="M5.500 6.200c0-3.400 5.200-3.200 5 0 0 1.800-2.400 1.900-2.400 4" stroke="#fff" strokeWidth="1.900" /><circle cx="8" cy="12.300" r="1.200" fill="#fff" /></Ic></button>
          </TabEnd>
        </TabRow>
      </Glass>

      <Ribbon>
        <Group $w={77}>
          <GroupBody>
            <PasteButton><PasteIcon /><span>Paste</span><Down /></PasteButton>
            <SideIcons><CutIcon /><CopyIcon /><BrushIcon /></SideIcons>
          </GroupBody>
          <Label text="Clipboard" />
        </Group>

        <Group $w={270}>
          <GroupBody $pad={5}>
            <Rows>
              <Row>
                <Combo $w={99}><select aria-label="Font"><option>Arial</option></select><Down /></Combo>
                <Combo $w={44}><select aria-label="Font size"><option>9.5</option></select><Down /></Combo>
                <Tool $w={25} aria-label="Grow font"><GrowIcon /></Tool>
                <Tool $w={22} aria-label="Shrink font"><GrowIcon down /></Tool>
                <Gap $w={6}><Rule $h={20} /></Gap>
                <Tool $w={38} aria-label="Change case"><Ic w={18} h={16}><text x="0" y="13" fontSize="14" fontWeight="700" fontFamily="Liberation Serif" fill="#333">Aa</text></Ic><Down /></Tool>
                <Gap $w={4}><Rule $h={20} /></Gap>
                <Tool $w={27} aria-label="Clear formatting"><EraserIcon /></Tool>
              </Row>
              <Row>
                <Tool $w={23} aria-label="Bold"><Ic w={12} h={15}><text x="1" y="12" fontSize="14" fontWeight="700" fontFamily="Liberation Serif" fill="#111" stroke="#111" strokeWidth=".5">B</text></Ic></Tool>
                <Tool $w={23} aria-label="Italic"><Ic w={10} h={15}><text x="2" y="12" fontSize="14" fontWeight="700" fontStyle="italic" fontFamily="Liberation Serif" fill="#111">I</text></Ic></Tool>
                <Tool $w={36} aria-label="Underline"><Ic w={12} h={15}><text x="1" y="11" fontSize="13" fontWeight="700" fontFamily="Liberation Serif" fill="#111">U</text><path d="M1 13.500h10" stroke="#111" /></Ic><Down /></Tool>
                <Tool $w={24} aria-label="Strikethrough"><Ic w={17} h={15}><text x="1" y="11" fontSize="11" fontWeight="700" fontFamily="Liberation Serif" fill="#222">abc</text><path d="M0 8.500h17" stroke="#111" /></Ic></Tool>
                <Tool $w={24} aria-label="Subscript"><Ic w={14} h={16}><path d="M2 5l6 6.500M8 5l-6 6.500" stroke="#111" strokeWidth="2" /><text x="9" y="14" fontSize="7" fontWeight="700" fontFamily="Liberation Sans" fill="#2f5cb4">2</text></Ic></Tool>
                <Tool $w={23} aria-label="Superscript"><Ic w={14} h={16}><path d="M2 5l6 6.500M8 5l-6 6.500" stroke="#111" strokeWidth="2" /><text x="9" y="6" fontSize="7" fontWeight="700" fontFamily="Liberation Sans" fill="#2f5cb4">2</text></Ic></Tool>
                <Gap $w={6}><Rule $h={20} /></Gap>
                <Tool $w={32} aria-label="Text effects"><GlowIcon /><Down /></Tool>
                <Tool $w={34} aria-label="Highlight"><HighlightIcon /><Down /></Tool>
                <Tool $w={34} aria-label="Font colour"><FontColorIcon /><Down /></Tool>
              </Row>
            </Rows>
          </GroupBody>
          <Label text="Font" />
        </Group>

        <Group $w={227}>
          <GroupBody $pad={4}>
            <Rows>
              <Row>
                <Tool $w={34} aria-label="Bullets"><ListIcon kind="dots" /><Down /></Tool>
                <Tool $w={34} aria-label="Numbering"><ListIcon kind="nums" /><Down /></Tool>
                <Tool $w={34} aria-label="Multilevel list"><ListIcon kind="multi" /><Down /></Tool>
                <Gap $w={6}><Rule $h={20} /></Gap>
                <Tool $w={23} aria-label="Decrease indent"><IndentIcon out /></Tool>
                <Tool $w={23} aria-label="Increase indent"><IndentIcon /></Tool>
                <Gap $w={8}><Rule $h={20} /></Gap>
                <Tool $w={23} aria-label="Sort"><SortIcon /></Tool>
                <Gap $w={8}><Rule $h={20} /></Gap>
                <Tool $w={26} aria-label="Show marks"><Ic w={10} h={14}><path d="M5 1h5M6 1v12M8.500 1v12" stroke="#222" strokeWidth="1.200" /><path d="M6 0v7.500C-1 8-1 0 6 0z" fill="#222" /></Ic></Tool>
              </Row>
              <Row>
                <Tool $w={23} $on aria-label="Align left"><AlignIcon kind="left" /></Tool>
                <Tool $w={24} aria-label="Centre"><AlignIcon kind="center" /></Tool>
                <Tool $w={23} aria-label="Align right"><AlignIcon kind="right" /></Tool>
                <Tool $w={24} aria-label="Justify"><AlignIcon kind="full" /></Tool>
                <Gap $w={8}><Rule $h={20} /></Gap>
                <Tool $w={32} aria-label="Line spacing"><SpacingIcon /><Down /></Tool>
                <Gap $w={9}><Rule $h={20} /></Gap>
                <Tool $w={34} aria-label="Shading"><ShadingIcon /><Down /></Tool>
                <Tool $w={33} $on aria-label="Borders"><BorderIcon /><Split><Down /></Split></Tool>
              </Row>
            </Rows>
          </GroupBody>
          <Label text="Paragraph" />
        </Group>

        <Group $w={363}>
          <GroupBody $pad={6}>
            <Gallery>
              {styleItems.map((s) => (
                <StyleItem key={s.name} $on={s.on}><Sample $kind={s.kind}>{s.sample}</Sample><StyleName>{s.name}</StyleName></StyleItem>
              ))}
              <GalleryScroll>
                <button aria-label="Previous styles"><Tri dir="u" s={5} c="#b5b9bf" /></button>
                <button aria-label="Next styles"><Down /></button>
                <button aria-label="More styles"><Ic w={7} h={6}><path d="M0 .5h7" stroke="#555b63" /><path d="M1 3h5L3.500 6z" fill="#555b63" /></Ic></button>
              </GalleryScroll>
            </Gallery>
            <ChangeButton><ChangeIcon /><span>Change</span><Inline>Styles <Down /></Inline></ChangeButton>
          </GroupBody>
          <Label text="Styles" />
        </Group>

        <Group $w={75}>
          <GroupBody $pad={8} $top={1}>
            <EditList>
              <EditButton><FindIcon /><Inline>Find</Inline><Gap $w={10}><Down /></Gap></EditButton>
              <EditButton><ReplaceIcon />Replace</EditButton>
              <EditButton><PointerIcon /><Inline>Select</Inline><Gap $w={8}><Down /></Gap></EditButton>
            </EditList>
          </GroupBody>
          <Label text="Editing" launcher={false} />
        </Group>
      </Ribbon>

      <Workspace>
        <NavPane>
          <NavHead>
            <h2>Navigation</h2>
            <button aria-label="Pane options"><Ic w={9} h={5}><path d="M0 0h9L4.500 5z" fill="#333" /></Ic></button>
            <button aria-label="Close pane"><Ic w={9} h={9}><path d="M1 1l7 7M8 1L1 8" stroke="#444950" strokeWidth="2" /></Ic></button>
          </NavHead>
          <Search><input aria-label="Search Document" placeholder="Search Document" /><SearchIcon /><Down /></Search>
          <NavTabs>
            <NavTab $on aria-label="Headings"><PageTab /></NavTab>
            <NavTab aria-label="Pages"><GridTab /></NavTab>
            <NavTab aria-label="Results"><ResultTab /></NavTab>
            <NavArrows>
              <button aria-label="Previous heading"><Tri dir="u" c="#4b5058" /></button>
              <button aria-label="Next heading"><Tri dir="d" c="#9a9fa7" /></button>
            </NavArrows>
          </NavTabs>
          <NavList>
            <Headings>
              <Heading $level={0} aria-label="Top"><Ic w={8} h={7}><path d="M0 .5h8" stroke="#333" /><path d="M0 6l4-4 4 4z" fill="#333" /></Ic></Heading>
              <Heading $level={1}><Ic w={7} h={7}><path d="M6.500 .5v6h-6z" fill="#222" /></Ic><span>POSITION-----------------------------------------</span></Heading>
              <Heading $level={2} $on aria-label="Untitled heading" />
            </Headings>
            <NavScroll>
              <ScrollEnd aria-label="Scroll up"><Tri dir="u" c="#8b97ad" s={9} /></ScrollEnd>
              <ScrollEnd aria-label="Scroll down"><Tri dir="d" c="#8b97ad" s={9} /></ScrollEnd>
            </NavScroll>
          </NavList>
        </NavPane>

        <DocPane>
          <DocView>
            <Page>
              <Column>
                <Big $under>SURF BAY LEISURE AFTERSALES WORKSHEET</Big>
                <Big>{"I AUTHORISE SURF BAY LEISURE TO ENTER THE CARAVAN\nLISTED BELOW:"}</Big>
                <Big>SIGNATURE------------------------------------------- DATE--------------------</Big>
                <Big $left>POSITION-----------------------------------------------</Big>
              </Column>
              <Sheet>
                <colgroup><col width="328" /><col /></colgroup>
                <tbody>
                  <tr>
                    <Cell $h={119}>
                      <Line $short><small>WORK CODE:</small></Line>
                      <Line><small>LOG NO:</small> QUOT-1087</Line>
                      {details.map(([k, v]) => <Line key={k} $shade><small>{k}</small>{v}</Line>)}
                      <Line $shade $tight><small>STOCK NO:</small></Line>
                    </Cell>
                    <Cell $h={119}>
                      <RightCell>
                        <Address><span>ADDRESS:</span><span>Trethias Farm</span></Address>
                        <Postcode>PI28 8PL</Postcode>
                        <Line><small>PITCH NO:</small>{"    C10 Mr and Mrs Kazantzis"}</Line>
                        <Line $short><small>TEL:</small></Line>
                      </RightCell>
                    </Cell>
                  </tr>
                </tbody>
              </Sheet>
              <Column><Caption>Problem</Caption></Column>
              <Sheet>
                <tbody>
                  <tr><Cell $h={18} /></tr>
                  <tr><Cell $h={18} /></tr>
                  <tr>
                    <Cell $h={75}>
                      <Notes>
                        <Squiggle $c="#e03030">Notes:Mrs</Squiggle> <Squiggle $c="#e03030">Kazantzis</Squiggle>
                        {" has advise me today that 3 meters of guttering has blown off her van, the site have saved\nthe guttering, but its broken 3 gutter brackets and a joint.. If you have the parts on your van could you please\nrepair, please note how long this has taken/ parts used so we can add it onto the insurance bill.\nIf you don’t have the parts could you let us know what you need to do the repair "}
                        <Squiggle $c="#2f9a3c">please,</Squiggle> thanks
                      </Notes>
                    </Cell>
                  </tr>
                </tbody>
              </Sheet>
              <Caption />
              <Sheet>
                <thead><tr><th scope="col"><Caption>Details of Work Done</Caption></th></tr></thead>
                <tbody><tr><Cell $h={200} /></tr></tbody>
              </Sheet>
            </Page>
          </DocView>
          <HScroll>
            <BarEnd aria-label="Scroll left"><Tri dir="l" s={9} /></BarEnd>
            <HThumb><Ic w={8} h={6} crisp><path d="M.5 0v6M2.500 0v6M4.500 0v6M6.500 0v6" stroke="#7d838d" /></Ic></HThumb>
            <BarEnd aria-label="Scroll right"><Tri dir="r" s={9} /></BarEnd>
          </HScroll>
        </DocPane>
        <VScroll>
          <BarEnd $tall aria-label="Ruler"><Ic w={12} h={18}><path d="M2 1h9" stroke="#6b7078" strokeWidth="2" /><path d="M.5 7.500h11v7H.5z" fill="#eef0f4" stroke="#6b7078" /><path d="M2.500 6.500h3v3h-3zM7.500 12.500h3v4h-3zM4.500 9.500l4 4" fill="#fff" stroke="#555a62" /></Ic></BarEnd>
          <BarEnd aria-label="Scroll up"><Tri dir="u" s={9} /></BarEnd>
          <VTrack><VThumb><Ic w={8} h={8} crisp><path d="M0 .5h8M0 2.500h8M0 4.500h8M0 6.500h8" stroke="#8a909b" /></Ic></VThumb></VTrack>
          <BarEnd aria-label="Scroll down"><Tri dir="d" s={9} /></BarEnd>
          <BarEnd aria-label="Previous page"><Ic w={7} h={8}><path d="M0 3l3.500-3L7 3zM0 7l3.500-3L7 7z" fill="#4b5058" /></Ic></BarEnd>
          <BarEnd aria-label="Browse object"><Ic w={8} h={8}><circle cx="4" cy="4" r="3" fill="#eef0f4" stroke="#555a62" /></Ic></BarEnd>
          <BarEnd aria-label="Next page"><Ic w={7} h={8}><path d="M0 0l3.500 3L7 0zM0 4l3.500 3L7 4z" fill="#4b5058" /></Ic></BarEnd>
        </VScroll>
      </Workspace>

      <Status>
        <StatusText>Page: 1 of 1</StatusText>
        <StatusText>Words: 158</StatusText>
        <StatusText aria-label="Proofing errors"><BookIcon /></StatusText>
        <Views>
          <ViewButton $on aria-label="Print layout"><PrintView /></ViewButton>
          <ViewButton aria-label="Reading"><ReadView /></ViewButton>
          <ViewButton aria-label="Web layout"><WebView /></ViewButton>
          <ViewButton aria-label="Outline"><OutlineView /></ViewButton>
          <ViewButton aria-label="Draft"><DraftView /></ViewButton>
        </Views>
        <Percent>100%</Percent>
        <button aria-label="Zoom out"><Round /></button>
        <Zoom type="range" aria-label="Zoom" defaultValue={50} />
        <button aria-label="Zoom in"><Round plus /></button>
      </Status>

      <Taskbar>
        <Start aria-label="Start"><StartIcon /></Start>
        <TaskButton aria-label="Explorer"><FolderIcon /></TaskButton>
        <TaskButton aria-label="Chrome"><ChromeIcon /></TaskButton>
        <TaskButton $stack aria-label="Outlook"><OutlookIcon /></TaskButton>
        <TaskButton aria-label="Sage"><SageIcon /></TaskButton>
        <TaskButton $on aria-label="Word"><WordIcon s={29} /></TaskButton>
        <Tray>
          <Tri dir="u" c="#fff" s={7} />
          <Ic w={16} h={16}><circle cx="8" cy="8" r="7" fill="#43c71d" /><ellipse cx="8" cy="5" rx="4.500" ry="3" fill="#a5ef7d" /></Ic>
          <FlagIcon /><NetIcon /><SoundIcon />
          <Clock>15:59<br />12/02/2014</Clock>
          <ShowDesktop aria-label="Show desktop" />
        </Tray>
      </Taskbar>
    </Window>
  );
}
